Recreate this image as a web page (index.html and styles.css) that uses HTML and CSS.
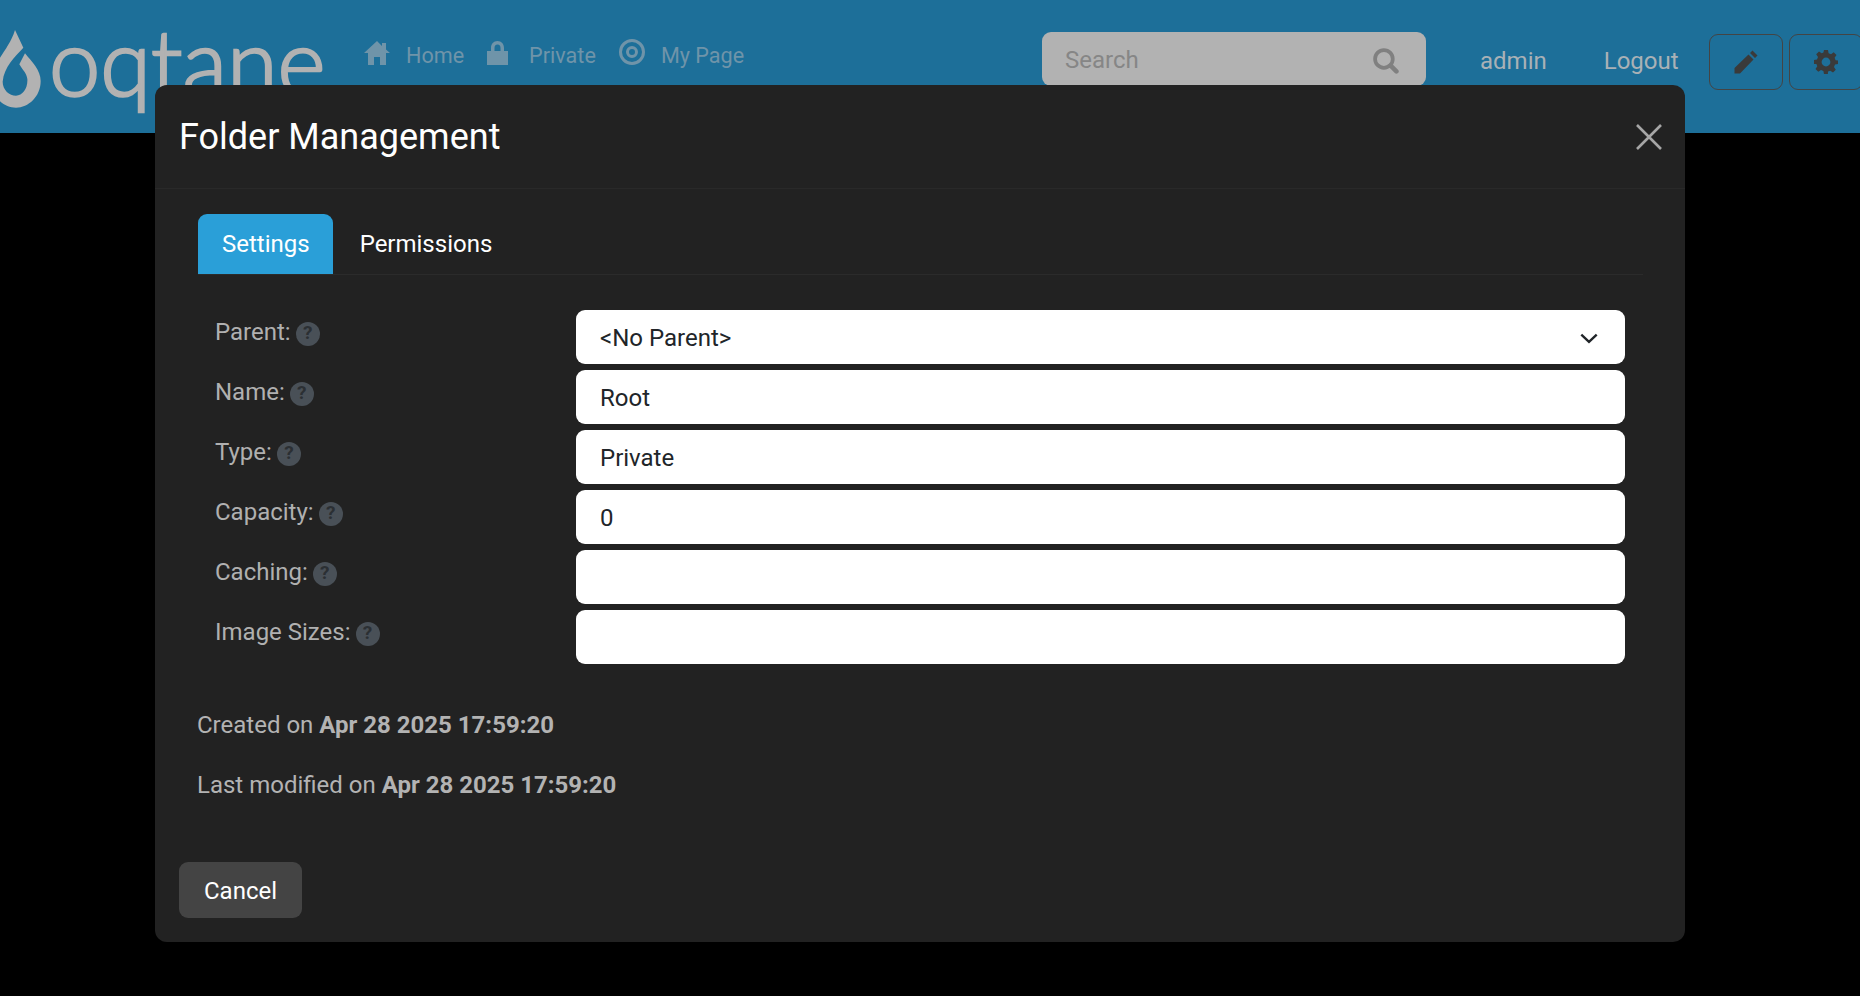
FILE: index.html
```html
<!DOCTYPE html>
<html lang="en">
<head>
  <meta charset="UTF-8">
  <title>Folder Management</title>
  <link rel="stylesheet" href="styles.css">
</head>
<body>

  <header class="topbar">
    <a class="logo">
      <svg class="logo-drop" width="41" height="78" viewBox="0 15 123 234">
        <path fill="#b2b2b2" d="M45 15L70 68C45 95 12 125 8 170C8 195 28 212 48 212C68 212 84 190 82 162C80 145 68 135 58 118L75 85C95 110 122 135 122 168C122 215 85 248 48 248C10 248 -25 215 -25 170C-25 110 25 80 45 15Z"/>
      </svg>
      <span class="logo-text">oqtane</span>
    </a>

    <nav class="nav">
      <a class="nav-item">
        <svg class="nav-icon" width="26" height="24" viewBox="0 0 26 24"><path d="M13 0L0 12H4V24H10V16H16V24H22V12H26L22 8.5V2H18V5L13 0Z"/></svg>
        Home
      </a>
      <a class="nav-item">
        <svg class="nav-icon nav-icon-lock" width="21" height="24" viewBox="0 0 21 24"><path fill-rule="evenodd" d="M10.5 0C6.5 0 4 3 4 7V10H0V24H21V10H17V7C17 3 14.5 0 10.5 0ZM10.5 3.5C12.6 3.5 13.5 5 13.5 7V10H7.5V7C7.5 5 8.4 3.5 10.5 3.5Z"/></svg>
        Private
      </a>
      <a class="nav-item">
        <svg class="nav-icon nav-icon-raised" width="26" height="26" viewBox="0 0 26 26"><path fill-rule="evenodd" d="M13 0A13 13 0 1 0 13 26A13 13 0 1 0 13 0ZM13 3A10 10 0 1 1 13 23A10 10 0 1 1 13 3ZM13 7A6 6 0 1 0 13 19A6 6 0 1 0 13 7ZM13 10A3 3 0 1 1 13 16A3 3 0 1 1 13 10Z"/></svg>
        My Page
      </a>
    </nav>

    <div class="search">
      <span class="search-text">Search</span>
      <svg class="search-icon" width="26" height="26" viewBox="0 0 25 25"><circle cx="10.5" cy="10.5" r="8.5" fill="none" stroke="#808080" stroke-width="3.6"/><path d="M17 17L22.5 22.5" stroke="#808080" stroke-width="4.4" stroke-linecap="round"/></svg>
    </div>

    <a class="user-link user-admin">admin</a>
    <a class="user-link user-logout">Logout</a>

    <button class="tool-btn">
      <svg width="24" height="24" viewBox="0 0 24 24"><path fill="#3a3a3a" d="M18.5 0.5L23.5 5.5L21 8L16 3ZM14.5 4.5L19.5 9.5L6 23.5H0.5V18Z"/></svg>
    </button>
    <button class="tool-btn tool-btn-last">
      <svg width="24" height="24" viewBox="0 0 24 24"><path fill="#3a3a3a" fill-rule="evenodd" d="M10 0H14L14.6 3.2L17 4.2L19.7 2.3L22.5 5.1L20.6 7.8L21.6 10.2L24 10.4V14L21 14.6L20 17L21.8 19.7L19 22.5L16.3 20.7L14 21.6L13.9 24H10L9.4 21L7 20L4.3 21.8L1.5 19L3.3 16.3L2.4 14L0 13.9V10L3 9.4L4 7L2.2 4.3L5 1.5L7.7 3.3L9.4 2.6ZM12 7.6A4.4 4.4 0 1 0 12 16.4A4.4 4.4 0 1 0 12 7.6Z"/></svg>
    </button>
  </header>

  <div class="overlay">
    <div class="modal">
      <div class="modal-header">
        <h4 class="modal-title">Folder Management</h4>
        <svg class="modal-close" width="26" height="26" viewBox="0 0 26 26"><path d="M1 1L25 25M25 1L1 25" stroke="#a6a6a6" stroke-width="2.6"/></svg>
      </div>

      <div class="modal-body">
        <div class="tabs">
          <a class="tab active">Settings</a>
          <a class="tab">Permissions</a>
        </div>

        <div class="form">
          <div class="row">
            <label class="row-label">Parent: <span class="help">?</span></label>
            <div class="field field-select">&lt;No Parent&gt;
              <svg class="field-arrow" width="18" height="11" viewBox="0 0 16 10"><path d="M1 1.5L8 8L15 1.5" fill="none" stroke="#212529" stroke-width="2.2"/></svg>
            </div>
          </div>
          <div class="row">
            <label class="row-label">Name: <span class="help">?</span></label>
            <div class="field">Root</div>
          </div>
          <div class="row">
            <label class="row-label">Type: <span class="help">?</span></label>
            <div class="field">Private</div>
          </div>
          <div class="row">
            <label class="row-label">Capacity: <span class="help">?</span></label>
            <div class="field">0</div>
          </div>
          <div class="row">
            <label class="row-label">Caching: <span class="help">?</span></label>
            <div class="field"></div>
          </div>
          <div class="row">
            <label class="row-label">Image Sizes: <span class="help">?</span></label>
            <div class="field"></div>
          </div>
        </div>

        <p class="audit">Created on <b>Apr 28 2025 17:59:20</b></p>
        <p class="audit">Last modified on <b>Apr 28 2025 17:59:20</b></p>
      </div>

      <div class="modal-footer">
        <button class="cancel">Cancel</button>
      </div>
    </div>
  </div>

</body>
</html>
```

FILE: styles.css
```css
* {
  box-sizing: border-box;
}
body {
  margin: 0;
  height: 996px;
  overflow: hidden;
  background: #000;
  font-family: Roboto, "Liberation Sans", sans-serif;
  font-size: 24px;
  line-height: 1.5;
}
.topbar {
  display: flex;
  align-items: flex-start;
  height: 133px;
  background: #1d6f99;
  overflow: hidden;
}
.logo {
  display: flex;
  flex: none;
  width: 364px;
  height: 133px;
}
.logo-drop {
  flex: none;
  margin-top: 30px;
}
.logo-text {
  margin: -6px 0 0 8px;
  font-family: Lato, sans-serif;
  font-weight: 300;
  font-size: 92px;
  line-height: 133px;
  color: #b2b2b2;
  -webkit-text-stroke: 2.5px #b2b2b2;
}
.nav {
  display: flex;
  flex: none;
  width: 678px;
  gap: 23px;
  padding-top: 41px;
}
.nav-item {
  display: flex;
  align-items: center;
  gap: 16px;
  height: 30px;
  font-size: 21.6px;
  color: #6f94a9;
}
.nav-icon {
  margin-top: -6px;
  fill: #6f94a9;
}
.nav-icon-lock {
  margin-right: 5px;
}
.nav-icon-raised {
  margin-top: -8px;
}
.search {
  display: flex;
  flex: none;
  align-items: center;
  justify-content: space-between;
  width: 384px;
  height: 54px;
  margin-top: 32px;
  padding: 0 27px 0 23px;
  background: #b2b2b2;
  border-radius: 9px;
  color: #868686;
}
.search-text {
  margin-top: 1px;
}
.search-icon {
  margin-top: 4px;
}
.user-link {
  flex: none;
  margin-top: 43px;
  color: #a9b1b6;
}
.user-admin {
  margin-left: 54px;
}
.user-logout {
  margin-left: 57px;
}
.tool-btn {
  display: flex;
  flex: none;
  align-items: center;
  justify-content: center;
  width: 74px;
  height: 56px;
  margin: 34px 0 0 30px;
  padding: 0;
  background: transparent;
  border: 1px solid #444;
  border-radius: 9px;
}
.tool-btn-last {
  margin-left: 6px;
}
.overlay {
  position: fixed;
  top: 85px;
  left: 155px;
  width: 1530px;
}
.modal {
  background: #222;
  border-radius: 12px;
  height: 857px;
}
.modal-header {
  display: flex;
  align-items: center;
  justify-content: space-between;
  height: 104px;
  padding: 0 24px;
  border-bottom: 1px solid #292929;
}
.modal-title {
  margin: 0;
  font-size: 36px;
  font-weight: 400;
  color: #fff;
}
.modal-close {
  margin-right: -1px;
}
.modal-body {
  padding: 25px 42px 0 43px;
}
.tabs {
  display: flex;
  gap: 2.5px;
  height: 61px;
  border-bottom: 1px solid #2b2b2b;
}
.tab {
  display: flex;
  align-items: center;
  height: 60px;
  padding: 0 24px;
  border-radius: 9px 9px 0 0;
  color: #fff;
}
.tab.active {
  padding-right: 23.5px;
  background: #2a9fd8;
}
.form {
  display: flex;
  flex-direction: column;
  gap: 6px;
  margin: 35px 18px 0 0;
}
.row {
  display: flex;
  align-items: flex-start;
}
.row-label {
  display: flex;
  flex: none;
  align-items: center;
  gap: 5px;
  width: 378px;
  padding: 4px 0 0 17px;
  color: #b0b0b0;
}
.help {
  display: flex;
  align-items: center;
  justify-content: center;
  width: 24px;
  height: 24px;
  margin-top: 3px;
  background: #495057;
  border-radius: 50%;
  font-size: 19px;
  font-weight: 700;
  color: #2b2f33;
}
.field {
  display: flex;
  flex: 1;
  align-items: center;
  justify-content: space-between;
  height: 54px;
  padding: 2px 24px 0;
  background: #fff;
  border-radius: 9px;
  color: #212529;
}
.field-arrow {
  margin-right: 3px;
}
.audit {
  margin: 0 0 0 -1px;
  padding-top: 24px;
  height: 60px;
  color: #b3b3b3;
}
.form + .audit {
  margin-top: 19px;
}
.audit b {
  font-weight: 700;
}
.modal-footer {
  padding: 59px 24px 0;
}
.cancel {
  height: 56px;
  width: 123px;
  padding: 2px 0 0;
  background: #444;
  border: none;
  border-radius: 9px;
  font: inherit;
  color: #fff;
}
```
